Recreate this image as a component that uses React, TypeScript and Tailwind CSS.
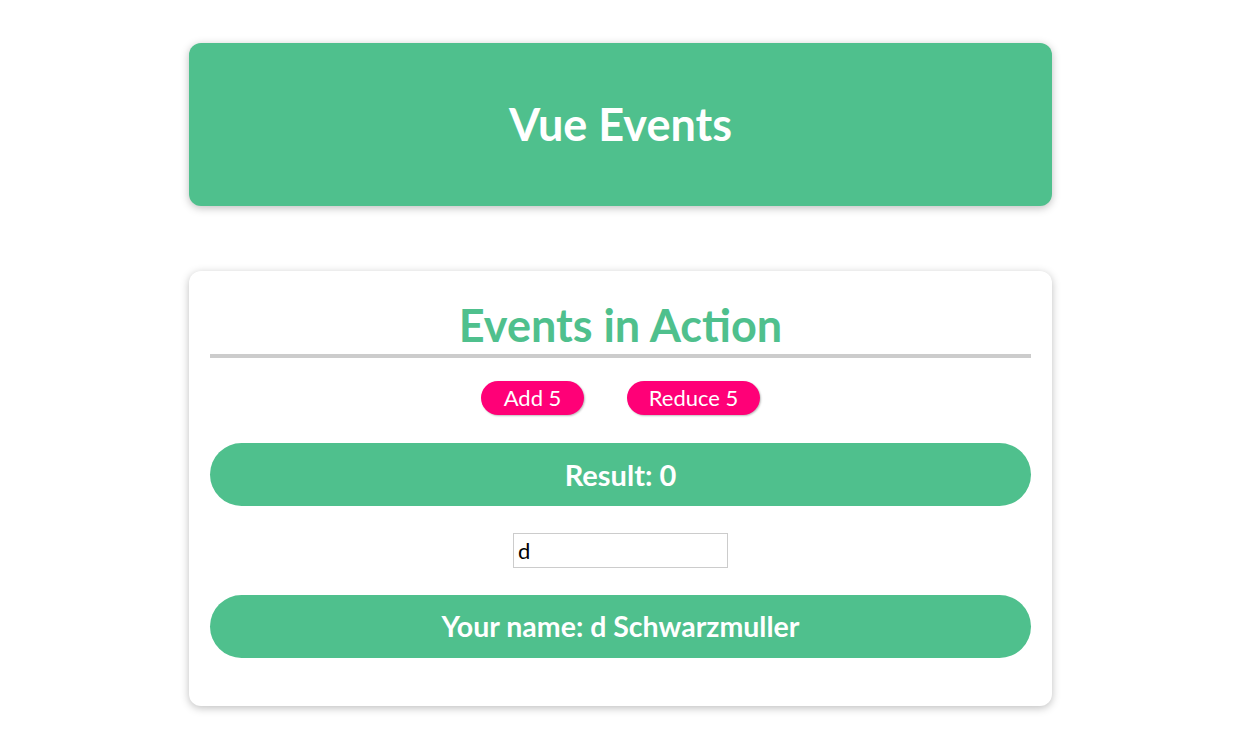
import { useState } from "react"

const font = { fontFamily: "Lato, 'Open Sans', sans-serif" }

export default function App() {
  const [counter, setCounter] = useState(0)
  const [name, setName] = useState("d")

  return (
    <div className="min-h-screen bg-white pt-[43px] pb-10 text-white" style={font}>
      <div className="w-[1241px]">
        <header className="mx-auto flex h-[163px] w-[863px] items-center justify-center rounded-xl bg-[#4fc08d] shadow-[0_2px_8px_rgba(0,0,0,0.26)]">
          <h1 className="text-[45px] font-bold leading-none">Vue Events</h1>
        </header>

        <section className="mx-auto mt-[65px] w-[863px] rounded-xl bg-white px-[21px] pt-[28px] pb-[48px] text-center shadow-[0_2px_8px_rgba(0,0,0,0.26)]">
          <h2 className="border-b-4 border-[#ccc] pb-[3px] text-[45px] font-bold leading-[52px] text-[#4fc08d]">
            Events in Action
          </h2>

          <div className="mt-[23px] flex justify-center gap-[43px]">
            <button
              onClick={() => setCounter(counter + 5)}
              className="h-[34px] w-[103px] rounded-[30px] bg-[#ff0077] text-[22px] leading-none text-white shadow-[1px_1px_2px_rgba(0,0,0,0.26)]"
            >
              Add 5
            </button>
            <button
              onClick={() => setCounter(counter - 5)}
              className="h-[34px] w-[133px] rounded-[30px] bg-[#ff0077] text-[22px] leading-none text-white shadow-[1px_1px_2px_rgba(0,0,0,0.26)]"
            >
              Reduce 5
            </button>
          </div>

          <p className="mt-[28px] flex h-[63px] items-center justify-center rounded-full bg-[#4fc08d] text-[29px] font-bold">
            Result: {counter}
          </p>

          <input
            type="text"
            value={name}
            onChange={(e) => setName(e.target.value)}
            className="mx-auto mt-[27px] block h-[35px] w-[215px] border border-[#ccc] px-[4px] text-[22px] text-black outline-none"
          />

          <p className="mt-[27px] flex h-[63px] items-center justify-center rounded-full bg-[#4fc08d] text-[28.5px] font-bold">
            Your name: {name} Schwarzmuller
          </p>
        </section>
      </div>
    </div>
  )
}
